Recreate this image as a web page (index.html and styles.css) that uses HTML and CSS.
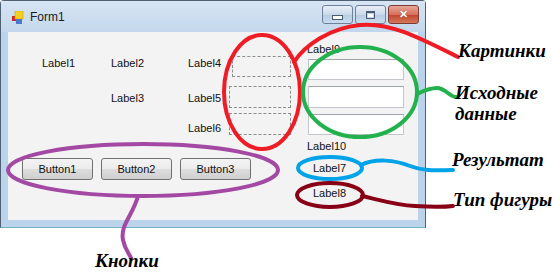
FILE: index.html
```html
<!DOCTYPE html>
<html lang="ru">
<head>
    <meta charset="UTF-8">
    <title>Form1</title>
    <link rel="stylesheet" href="styles.css">
</head>
<body>
    <div class="window">
        <div class="titlebar">
            <svg class="app-icon" width="12" height="13" viewBox="0 0 12 13">
                <rect x="0" y="5" width="4" height="5" fill="#d2232a"/>
                <rect x="3" y="0" width="8" height="8" fill="#f7d21d" stroke="#c8a000" stroke-width="0.6"/>
                <rect x="4" y="8" width="6" height="5" fill="#4a78d0"/>
            </svg>
            <span class="title">Form1</span>
            <div class="caption">
                <div class="cap-btn"><span class="glyph-min"></span></div>
                <div class="cap-btn"><span class="glyph-max"></span></div>
                <div class="cap-btn close"><span class="glyph-close">&#x2715;</span></div>
            </div>
        </div>
        <div class="client">
            <div class="left">
                <div class="top-area">
                    <div class="labels">
                        <span class="lbl">Label1</span>
                        <span class="lbl">Label2</span>
                        <span class="lbl">Label4</span>
                        <span></span>
                        <span class="lbl">Label3</span>
                        <span class="lbl">Label5</span>
                        <span></span>
                        <span></span>
                        <span class="lbl">Label6</span>
                    </div>
                    <div class="pics">
                        <div class="pic pic1"></div>
                        <div class="pic pic2"></div>
                        <div class="pic pic3"></div>
                    </div>
                </div>
                <div class="buttons">
                    <button class="btn">Button1</button>
                    <button class="btn">Button2</button>
                    <button class="btn">Button3</button>
                </div>
            </div>
            <div class="right">
                <span class="lbl label9">Label9</span>
                <div class="textbox tb1"></div>
                <div class="textbox tb2"></div>
                <div class="textbox tb3"></div>
                <span class="lbl label10">Label10</span>
                <span class="lbl label7">Label7</span>
                <span class="lbl label8">Label8</span>
            </div>
        </div>
    </div>

    <svg class="marks" width="553" height="273" viewBox="0 0 553 273">
        <g fill="none" stroke-width="4" stroke-linecap="round">
            <ellipse cx="262" cy="92" rx="38" ry="57" stroke="#ee1c24"/>
            <path d="M294,62 C305,45 330,28 360,25 C390,22 420,38 458,57" stroke="#ee1c24"/>
            <ellipse cx="360" cy="92" rx="57" ry="45" stroke="#22b14c"/>
            <path d="M417,94 C425,90 430,88 437,88 C445,88 450,97 456,97" stroke="#22b14c"/>
            <ellipse cx="330" cy="168" rx="32" ry="11" stroke="#00a2e8"/>
            <path d="M361,165 C375,158 395,160 410,166 C425,172 440,170 453,170" stroke="#00a2e8"/>
            <ellipse cx="330" cy="195" rx="33" ry="12" stroke="#880015"/>
            <path d="M362,196 C380,200 395,205 415,206 C430,207 445,207 453,206" stroke="#880015"/>
            <ellipse cx="143" cy="170" rx="135" ry="26" stroke="#a349a4"/>
            <path d="M138,196 C133,215 120,225 123,240 C125,250 129,253 131,258" stroke="#a349a4"/>
        </g>
    </svg>

    <div class="note note-pics">Картинки</div>
    <div class="note note-src">Исходные<br>данные</div>
    <div class="note note-res">Результат</div>
    <div class="note note-type">Тип фигуры</div>
    <div class="note note-btn">Кнопки</div>
</body>
</html>
```

FILE: styles.css
```css
body {
    margin: 0;
    background: #fff;
    width: 553px;
    height: 273px;
    position: relative;
    overflow: hidden;
    font-family: "Liberation Sans", Arial, sans-serif;
}

.window {
    width: 424px;
    height: 226px;
    border: 1px solid #4f6073;
    border-bottom-color: #6fb5c6;
    border-radius: 4px 4px 0 0;
    background: #bcd3ec;
    display: flex;
    flex-direction: column;
}

.titlebar {
    height: 31px;
    display: flex;
    align-items: center;
    padding-left: 11px;
    background: linear-gradient(to bottom, #d7e5f4, #c3d7ec);
}

.app-icon {
    margin-top: 1px;
}

.title {
    font-size: 12px;
    color: #1b1b1b;
    margin-left: 6px;
    margin-top: 1px;
}

.caption {
    margin-left: auto;
    margin-right: 6px;
    margin-top: -4px;
    display: flex;
    gap: 2px;
}

.cap-btn {
    width: 29px;
    height: 17px;
    border: 1px solid #6f8198;
    border-radius: 3px;
    background: linear-gradient(to bottom, #e8eff8, #cad9ea 50%, #b7cbe2 51%, #c9dcef);
    display: flex;
    justify-content: center;
    align-items: center;
}

.cap-btn.close {
    border-color: #7d3b33;
    background: linear-gradient(to bottom, #e8a898, #d7705c 50%, #c2432c 51%, #d3795c);
}

.glyph-min {
    width: 9px;
    height: 3px;
    margin-top: 5px;
    background: #fff;
    border: 1px solid #4a5a70;
}

.glyph-max {
    width: 7px;
    height: 5px;
    border: 1px solid #4a5a70;
    border-top-width: 2px;
    background: #fff;
    box-shadow: inset 0 0 0 1px #c6d5e6;
}

.glyph-close {
    font-size: 11px;
    font-weight: bold;
    color: #fff;
    line-height: 1;
    text-shadow: 0 0 1px #6b2418;
}

.client {
    margin: 0 7px;
    height: 188px;
    background: #f3f3f3;
    display: flex;
}

.lbl {
    font-size: 11px;
    line-height: 14px;
    color: #111;
    white-space: nowrap;
}

.left {
    width: 299px;
    padding-top: 24px;
}

.top-area {
    display: flex;
}

.labels {
    padding-left: 34px;
    display: grid;
    grid-template-columns: 69px 77px 41px;
    grid-template-rows: 35px 30px 14px;
}

.pics {
    display: flex;
    flex-direction: column;
}

.pic {
    width: 60px;
    height: 20px;
    border: 1px dashed #8d8d8d;
}

.pic1 {
    margin-left: 3px;
    width: 57px;
    height: 19px;
}

.pic2 {
    margin-top: 9px;
}

.pic3 {
    margin-top: 5px;
}

.buttons {
    display: flex;
    gap: 8px;
    padding-left: 14px;
    margin-top: 23px;
}

.btn {
    width: 71px;
    height: 22px;
    padding: 0;
    font-family: "Liberation Sans", Arial, sans-serif;
    font-size: 11px;
    color: #111;
    border: 1px solid #707070;
    border-radius: 3px;
    background: linear-gradient(to bottom, #f4f4f4, #ebebeb 50%, #dddddd 51%, #cfcfcf);
}

.right {
    padding-top: 10px;
    display: flex;
    flex-direction: column;
    align-items: flex-start;
}

.textbox {
    width: 94px;
    height: 19px;
    margin-left: 1px;
    background: #fff;
    border: 1px solid #c3c6cc;
    border-top-color: #9fa3aa;
}

.tb1 {
    margin-top: 3px;
}

.tb2 {
    margin-top: 6px;
    height: 20px;
}

.tb3 {
    margin-top: 6px;
}

.label10 {
    margin-top: 4px;
}

.label7 {
    margin-top: 8px;
    margin-left: 6px;
}

.label8 {
    margin-top: 11px;
    margin-left: 6px;
}

.marks {
    position: absolute;
    left: 0;
    top: 0;
    pointer-events: none;
}

.note {
    position: absolute;
    font-family: "Liberation Serif", "Times New Roman", serif;
    font-weight: bold;
    font-style: italic;
    font-size: 19px;
    line-height: 20px;
    color: #000;
    white-space: nowrap;
}

.note-pics {
    left: 458px;
    top: 41px;
}

.note-src {
    left: 455px;
    top: 82px;
    line-height: 21px;
}

.note-res {
    left: 452px;
    top: 150px;
}

.note-type {
    left: 453px;
    top: 190px;
}

.note-btn {
    left: 95px;
    top: 251px;
}
```
